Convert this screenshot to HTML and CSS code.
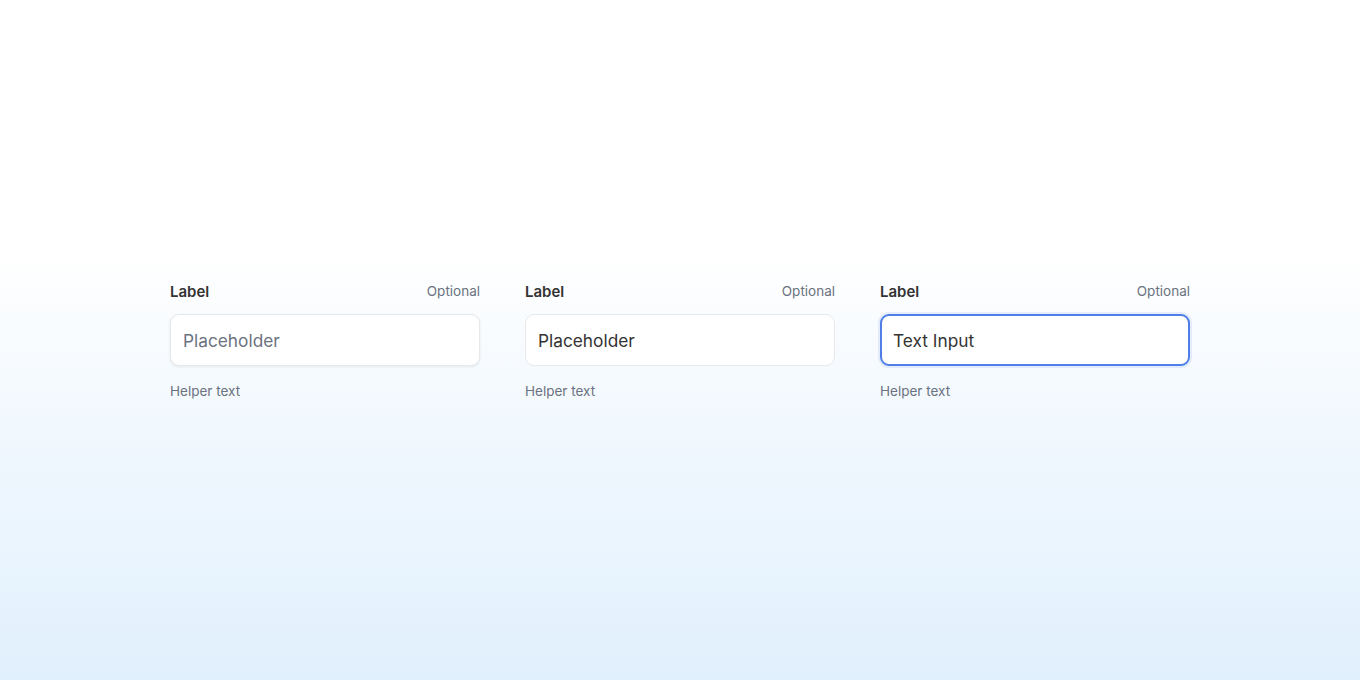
FILE: index.html
```html
<!DOCTYPE html>
<html lang="en">
<head>
    <meta charset="UTF-8">
    <meta name="viewport" content="width=device-width, initial-scale=1.0">
    <title>Text Input States</title>
    <link rel="stylesheet" href="styles.css">
</head>
<body>
    <div class="fields">
        <div class="field">
            <div class="field-head">
                <label for="inputDefault">Label</label>
                <span class="optional">Optional</span>
            </div>
            <input id="inputDefault" class="input input-default" type="text" placeholder="Placeholder">
            <p class="helper">Helper text</p>
        </div>
        <div class="field">
            <div class="field-head">
                <label for="inputHover">Label</label>
                <span class="optional">Optional</span>
            </div>
            <input id="inputHover" class="input input-hover" type="text" placeholder="Placeholder">
            <p class="helper">Helper text</p>
        </div>
        <div class="field">
            <div class="field-head">
                <label for="inputFocus">Label</label>
                <span class="optional">Optional</span>
            </div>
            <input id="inputFocus" class="input input-focus" type="text" value="Text Input">
            <p class="helper">Helper text</p>
        </div>
    </div>
</body>
</html>
```

FILE: styles.css
```css
html, body {
    margin: 0;
    height: 680px;
}
body {
    font-family: Inter, "Noto Sans", sans-serif;
    color: #333;
    background: linear-gradient(to bottom, #ffffff 0px, #ffffff 250px, #f3f9fe 400px, #e1f0fd 680px);
    overflow: hidden;
}
.fields {
    display: flex;
    justify-content: center;
    gap: 45px;
    padding-top: 281px;
}
.field {
    width: 310px;
    display: flex;
    flex-direction: column;
}
.field-head {
    display: flex;
    justify-content: space-between;
    align-items: center;
    height: 20px;
    margin-bottom: 13px;
}
.field-head label {
    font-size: 15px;
    font-weight: 600;
    color: #333;
}
.optional {
    font-size: 13.5px;
    color: #6b7280;
}
.input {
    box-sizing: border-box;
    height: 52px;
    width: 100%;
    padding: 0 12px;
    font-family: inherit;
    font-size: 17.3px;
    color: #333;
    background: #fff;
    border: 1px solid #e6e8eb;
    border-radius: 9px;
    outline: none;
}
.input-default {
    box-shadow: 0 1px 3px rgba(0, 0, 0, 0.08);
}
.input-default::placeholder {
    color: #6b7280;
}
.input-hover::placeholder {
    color: #333;
}
.input-focus {
    border: 2px solid #4f7fe6;
    padding: 0 11px;
    box-shadow: 0 0 0 2px rgba(79, 127, 230, 0.12);
}
.helper {
    margin: 17px 0 0;
    font-size: 13.5px;
    color: #6b7280;
}
```
